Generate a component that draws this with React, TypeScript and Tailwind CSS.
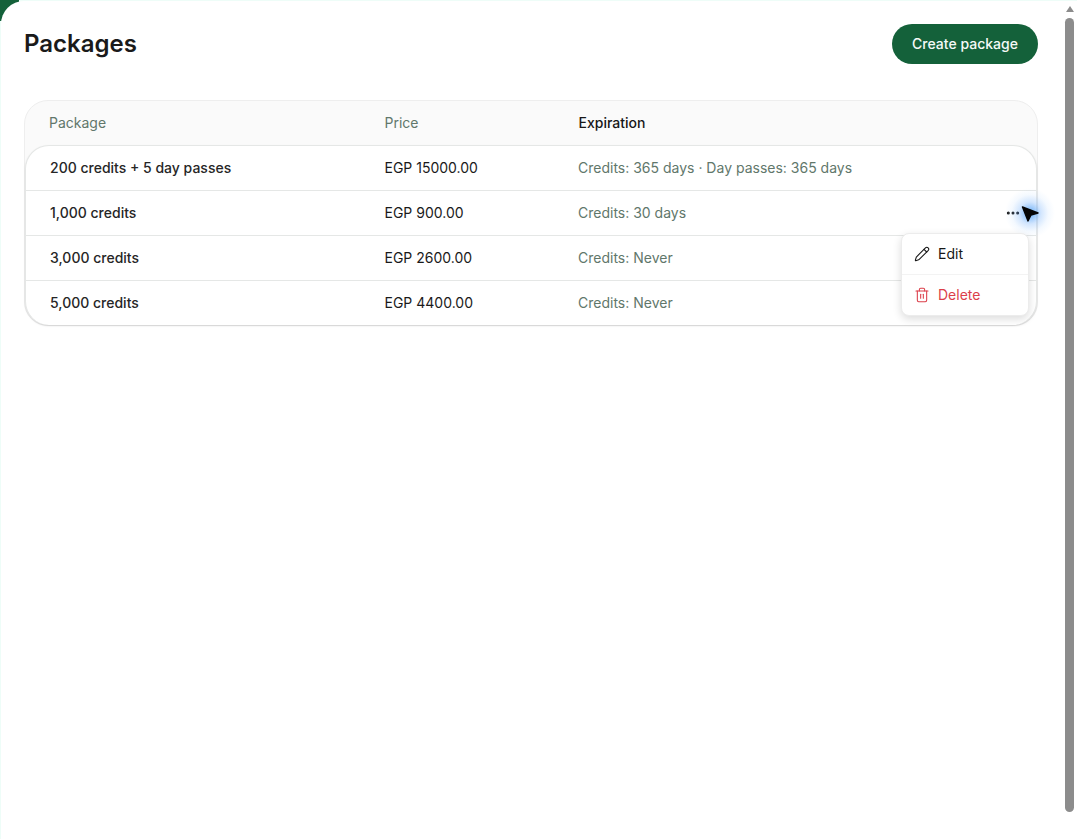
import { Ellipsis, Pencil, Trash2 } from "lucide-react";

const rows = [
  ["200 credits + 5 day passes", "EGP 15000.00", "Credits: 365 days · Day passes: 365 days"],
  ["1,000 credits", "EGP 900.00", "Credits: 30 days"],
  ["3,000 credits", "EGP 2600.00", "Credits: Never"],
  ["5,000 credits", "EGP 4400.00", "Credits: Never"],
];

export default function App() {
  return (
    <div className="relative h-[839px] w-[1077px] overflow-hidden bg-[#eefdf8] pl-[1px] pt-[1px] font-['Inter',sans-serif] text-[#171717]">
      <div className="absolute left-0 top-0 h-[21px] w-[19px] bg-[#14613a]" />
      <div className="relative flex h-full rounded-tl-[23px] bg-white">
        <main className="w-[1064px] shrink-0 pl-[23px] pr-[27px] pt-[23px]">
          <header className="flex h-10 items-center justify-between">
            <h1 className="text-2xl font-semibold leading-8 text-[#1a1a1a]">Packages</h1>
            <button className="h-10 w-[146px] rounded-full bg-[#14613a] text-sm font-medium text-[#f4faf7]">Create package</button>
          </header>
          <section className="mt-9 rounded-[24px] border border-[#eeeeee] bg-[#fafafa]">
            <div className="grid h-[44px] grid-cols-[335.5px_194px_1fr] items-center pl-6 text-sm">
              <span className="text-[#61776b]">Package</span>
              <span className="text-[#61776b]">Price</span>
              <span className="font-medium text-[#171717]">Expiration</span>
            </div>
            <div className="rounded-[24px] border border-b-0 border-[#e5e7e6] bg-white shadow-[0_1px_2px_rgba(0,0,0,0.12)]">
              {rows.map((r, i) => (
                <div key={r[0]} className={`grid grid-cols-[334.5px_193.5px_1fr_auto] items-center pl-6 pr-[15px] text-sm ${i > 0 ? "h-[45px] border-t border-[#e5e7e6]" : "h-[44px]"}`}>
                  <span className="font-medium text-[#262626]">{r[0]}</span>
                  <span className="text-[#1a1a1a]">{r[1]}</span>
                  <span className="text-[#61776b]">{r[2]}</span>
                  {i === 1 ? <Ellipsis className="h-4 w-4 text-[#171717]" strokeWidth={2.5} /> : <span />}
                </div>
              ))}
            </div>
          </section>
        </main>
        <aside className="flex w-[10px] flex-col items-start pt-[5px]">
          <div className="ml-[0.5px] h-0 w-0 border-x-[4px] border-b-[6px] border-x-transparent border-b-[#8c8c8c]" />
          <div className="mt-[6px] h-[794px] w-[9px] rounded-full bg-[#8c8c8c]" />
        </aside>
      </div>

      <div className="absolute left-[1004px] top-[187px] h-[52px] w-[52px] rounded-full bg-[radial-gradient(circle,rgba(56,148,246,0.75),rgba(96,165,250,0.28)_30%,rgba(147,197,253,0.1)_50%,rgba(147,197,253,0)_68%)]" />
      <svg className="absolute left-[1021px] top-[204px]" width="19" height="19" viewBox="0 0 19 19">
        <path d="M1.5 3 L17 9 L10 11 L7 17 Z" fill="#050505" stroke="#050505" strokeWidth="1.4" strokeLinejoin="round" />
      </svg>

      <div className="absolute left-[901px] top-[233px] w-[128px] rounded-lg border border-[#ececec] bg-white text-sm shadow-[0_3px_8px_rgba(0,0,0,0.14)]">
        <div className="flex h-[40px] items-center gap-2 pl-[12px] text-[#171717]">
          <Pencil className="h-4 w-4" strokeWidth={1.6} />
          <span>Edit</span>
        </div>
        <div className="flex h-[41px] items-center gap-2 border-t border-[#f3f3f3] pl-[12px] text-[#dc3f4a]">
          <Trash2 className="h-4 w-4" strokeWidth={1.6} />
          <span>Delete</span>
        </div>
      </div>
    </div>
  );
}
